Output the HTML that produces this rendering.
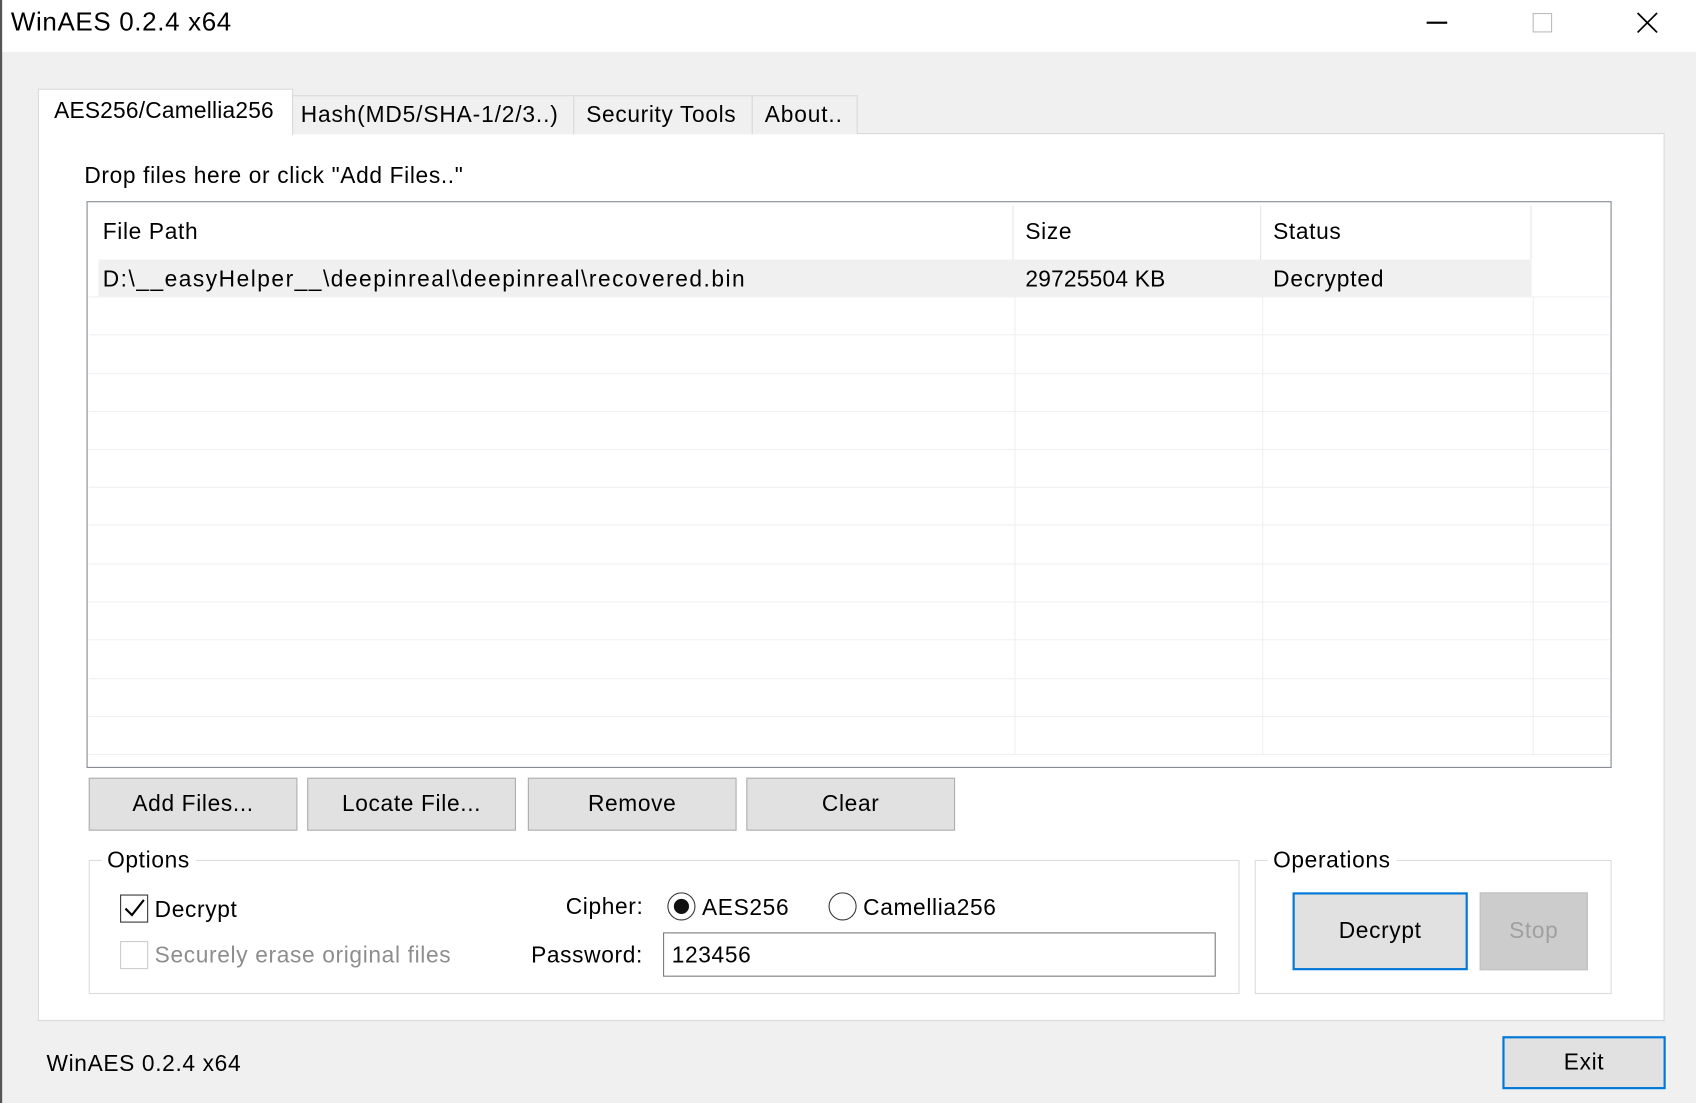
<!DOCTYPE html>
<html><head><meta charset="utf-8"><style>
html,body{margin:0;padding:0;overflow:hidden;width:1696px;height:1103px;background:#f0f0f0}
#w{position:absolute;left:0;top:0;width:1568px;height:1020px;transform:scale(1.08163);transform-origin:0 0;font-family:"Liberation Sans","DejaVu Sans",sans-serif;font-size:21px;color:#000;background:#f0f0f0;letter-spacing:0.6px}
.a{position:absolute;box-sizing:border-box}
.t{position:absolute;white-space:nowrap;line-height:1}
.btn{position:absolute;box-sizing:border-box;background:#e1e1e1;border:1px solid #adadad;display:flex;align-items:center;justify-content:center}
.hl{position:absolute;left:82px;width:1406px;height:1px;background:#f0f0f0}
.vl{position:absolute;top:274px;height:423px;width:1px;background:#f0f0f0}
</style></head><body><div id="w">
<div class="a" style="left:0;top:0;width:1568px;height:48px;background:#fff"></div>
<div class="a" style="left:0;top:0;width:2px;height:1020px;background:#555"></div>
<div class="t" style="left:10px;top:9px;font-size:24px">WinAES 0.2.4 x64</div>
<div class="a" style="left:1319px;top:20px;width:19px;height:2px;background:#000"></div>
<div class="a" style="left:1417px;top:12px;width:18px;height:18px;border:1px solid #bbb"></div>
<svg class="a" style="left:1513px;top:11px" width="20" height="20"><path d="M1 1L19 19M19 1L1 19" stroke="#000" stroke-width="1.6"/></svg>

<div class="a" style="left:35px;top:123px;width:1504px;height:821px;background:#fff;border:1px solid #d9d9d9"></div>
<div class="a" style="left:270px;top:88px;width:261px;height:36px;background:#f0f0f0;border:1px solid #d9d9d9;border-bottom:none"></div>
<div class="a" style="left:530px;top:88px;width:166px;height:36px;background:#f0f0f0;border:1px solid #d9d9d9;border-bottom:none"></div>
<div class="a" style="left:695px;top:88px;width:98px;height:36px;background:#f0f0f0;border:1px solid #d9d9d9;border-bottom:none"></div>
<div class="a" style="left:35px;top:82px;width:236px;height:43px;background:#fff;border:1px solid #d9d9d9;border-bottom:none"></div>
<div class="t" style="left:50px;top:92px;letter-spacing:0.2px">AES256/Camellia256</div>
<div class="t" style="left:278px;top:96px;letter-spacing:0.8px">Hash(MD5/SHA-1/2/3..)</div>
<div class="t" style="left:542px;top:96px">Security Tools</div>
<div class="t" style="left:707px;top:96px;letter-spacing:0.8px">About..</div>

<div class="t" style="left:78px;top:152px">Drop files here or click "Add Files.."</div>
<div class="a" style="left:80px;top:186px;width:1410px;height:524px;background:#fff;border:1px solid #828790"></div>
<div class="a" style="left:936px;top:190px;width:1px;height:50px;background:#e5e5e5"></div>
<div class="a" style="left:1165px;top:190px;width:1px;height:50px;background:#e5e5e5"></div>
<div class="a" style="left:1415px;top:190px;width:1px;height:50px;background:#e5e5e5"></div>
<div class="t" style="left:95px;top:204px">File Path</div>
<div class="t" style="left:948px;top:204px">Size</div>
<div class="t" style="left:1177px;top:204px">Status</div>
<div class="a" style="left:91px;top:240px;width:1325px;height:34px;background:#f0f0f0"></div>
<div class="t" style="left:95px;top:248px;letter-spacing:1.4px">D:\__easyHelper__\deepinreal\deepinreal\recovered.bin</div>
<div class="t" style="left:948px;top:248px;letter-spacing:0.2px">29725504 KB</div>
<div class="t" style="left:1177px;top:248px;letter-spacing:0.8px">Decrypted</div>
<div class="hl" style="top:274px"></div><div class="hl" style="top:309px"></div><div class="hl" style="top:345px"></div><div class="hl" style="top:380px"></div><div class="hl" style="top:415px"></div><div class="hl" style="top:450px"></div><div class="hl" style="top:485px"></div><div class="hl" style="top:521px"></div><div class="hl" style="top:556px"></div><div class="hl" style="top:591px"></div><div class="hl" style="top:627px"></div><div class="hl" style="top:662px"></div><div class="hl" style="top:697px"></div>
<div class="vl" style="left:938px"></div><div class="vl" style="left:1167px"></div><div class="vl" style="left:1417px"></div>

<div class="btn" style="left:82px;top:719px;width:193px;height:49px">Add Files...</div>
<div class="btn" style="left:284px;top:719px;width:193px;height:49px">Locate File...</div>
<div class="btn" style="left:488px;top:719px;width:193px;height:49px">Remove</div>
<div class="btn" style="left:690px;top:719px;width:193px;height:49px">Clear</div>

<div class="a" style="left:82px;top:795px;width:1064px;height:124px;border:1px solid #dcdcdc"></div>
<div class="t" style="left:94px;top:785px;background:#fff;padding:0 5px">Options</div>
<div class="a" style="left:111px;top:827px;width:26px;height:26px;border:1px solid #333;background:#fff"></div>
<svg class="a" style="left:113px;top:830px" width="22" height="20"><path d="M3 10L9 16L20 2" fill="none" stroke="#000" stroke-width="2"/></svg>
<div class="t" style="left:143px;top:831px">Decrypt</div>
<div class="a" style="left:111px;top:870px;width:26px;height:26px;border:1px solid #ccc;background:#fff"></div>
<div class="t" style="left:143px;top:873px;color:#8d8d8d">Securely erase original files</div>
<div class="t" style="left:523px;top:828px">Cipher:</div>
<div class="a" style="left:617px;top:825px;width:26px;height:26px;border:1.5px solid #333;border-radius:50%;background:#fff"></div>
<div class="a" style="left:623px;top:831px;width:14px;height:14px;border-radius:50%;background:#111"></div>
<div class="t" style="left:649px;top:829px">AES256</div>
<div class="a" style="left:766px;top:825px;width:26px;height:26px;border:1.5px solid #333;border-radius:50%;background:#fff"></div>
<div class="t" style="left:798px;top:829px">Camellia256</div>
<div class="t" style="left:491px;top:873px">Password:</div>
<div class="a" style="left:613px;top:862px;width:511px;height:41px;border:1px solid #7a7a7a;background:#fff"></div>
<div class="t" style="left:621px;top:873px">123456</div>

<div class="a" style="left:1160px;top:795px;width:330px;height:124px;border:1px solid #dcdcdc"></div>
<div class="t" style="left:1172px;top:785px;background:#fff;padding:0 5px">Operations</div>
<div class="btn" style="left:1195px;top:825px;width:162px;height:72px;border:2px solid #0078d7">Decrypt</div>
<div class="btn" style="left:1368px;top:825px;width:100px;height:72px;background:#cccccc;border-color:#bfbfbf;color:#a0a0a0">Stop</div>

<div class="t" style="left:43px;top:973px">WinAES 0.2.4 x64</div>
<div class="btn" style="left:1389px;top:958px;width:151px;height:49px;border:2px solid #0078d7">Exit</div>
</div></body></html>
